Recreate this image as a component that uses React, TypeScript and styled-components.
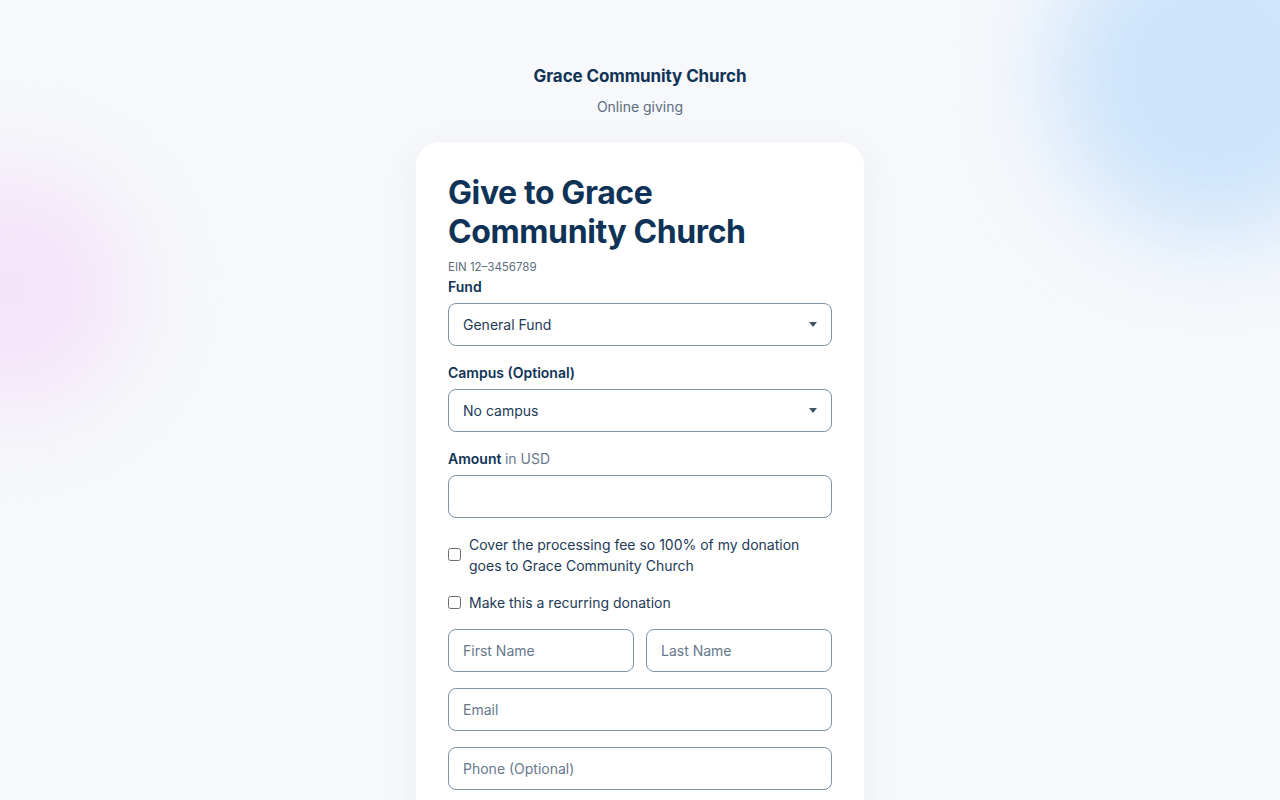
import React from "react";
import styled, { createGlobalStyle } from "styled-components";

const GlobalStyle = createGlobalStyle`
  * {
    box-sizing: border-box;
  }

  body {
    margin: 0;
    background-color: #f6f8fb;
    font-family: Inter, "Noto Sans", "Liberation Sans", sans-serif;
    color: #0f3356;
    overflow-x: hidden;
  }
`;

const Page = styled.div`
  position: relative;
  min-height: 100vh;
  overflow: hidden;
  display: flex;
  flex-direction: column;
  align-items: center;
  padding: 64px 16px 48px;
`;

const Blob = styled.div<{ $color: string; $size: number; $x: number; $y: number }>`
  position: absolute;
  left: ${(p) => p.$x}px;
  top: ${(p) => p.$y}px;
  width: ${(p) => p.$size}px;
  height: ${(p) => p.$size}px;
  border-radius: 50%;
  background: ${(p) => p.$color};
  filter: blur(45px);
  z-index: 0;
  pointer-events: none;
`;

const Header = styled.header`
  position: relative;
  z-index: 1;
  text-align: center;
  margin-bottom: 25px;
`;

const ChurchName = styled.h2`
  margin: 0;
  font-size: 17px;
  line-height: 24px;
  font-weight: 700;
  color: #0f3356;
  letter-spacing: -0.1px;
`;

const Subtitle = styled.p`
  margin: 9px 0 0;
  font-size: 14px;
  line-height: 20px;
  color: #5d6d80;
`;

const Card = styled.main`
  position: relative;
  z-index: 1;
  width: 448px;
  background: #ffffff;
  border-radius: 24px;
  padding: 32px 32px 40px;
  box-shadow: 0 10px 40px rgba(30, 50, 80, 0.06);
`;

const Title = styled.h1`
  margin: 0;
  font-size: 32px;
  line-height: 38.5px;
  font-weight: 700;
  letter-spacing: -0.4px;
  color: #0f3356;
`;

const Ein = styled.p`
  margin: 7.5px 0 2px;
  font-size: 11.5px;
  line-height: 16px;
  color: #5d6d80;
`;

const Field = styled.div<{ $mb?: number }>`
  display: flex;
  flex-direction: column;
  gap: 6px;
  margin-bottom: ${(p) => p.$mb ?? 17}px;
`;

const Label = styled.label`
  font-size: 14px;
  line-height: 20px;
  font-weight: 600;
  color: #0f3356;
`;

const LabelHint = styled.span`
  font-weight: 400;
  color: #6b7b8e;
`;

const SelectBox = styled.div`
  height: 43px;
  border: 1px solid #7f92a6;
  border-radius: 8px;
  display: flex;
  align-items: center;
  justify-content: space-between;
  padding: 0 14px;
  font-size: 14px;
  color: #1d3a57;
  background: #fff;
`;

const Caret = styled.span`
  width: 0;
  height: 0;
  border-left: 4.5px solid transparent;
  border-right: 4.5px solid transparent;
  border-top: 5px solid #42546a;
`;

const TextInput = styled.input`
  width: 100%;
  height: 43px;
  border: 1px solid #7f92a6;
  border-radius: 8px;
  padding: 0 14px;
  font-family: inherit;
  font-size: 14px;
  color: #1d3a57;
  background: #fff;
  outline: none;

  &::placeholder {
    color: #66788c;
  }
`;

const CheckRow = styled.label<{ $mb?: number }>`
  display: flex;
  align-items: center;
  gap: 8px;
  font-size: 14px;
  line-height: 21px;
  color: #1d3a57;
  margin-bottom: ${(p) => p.$mb ?? 16}px;
`;

const Box = styled.span`
  flex: none;
  width: 13px;
  height: 13px;
  border: 1px solid #6a6f76;
  border-radius: 2.5px;
  background: #fff;
`;

const NameRow = styled.div`
  display: grid;
  grid-template-columns: 1fr 1fr;
  gap: 12px;
  margin-top: 16px;
  margin-bottom: 16px;
`;

const Stack = styled.div`
  display: flex;
  flex-direction: column;
  gap: 16px;
`;

const Select = ({ value }: { value: string }) => (
  <SelectBox>
    <span>{value}</span>
    <Caret />
  </SelectBox>
);

export default function App() {
  return (
    <>
      <GlobalStyle />
      <Page>
        <Blob $color="#cde4fb" $size={330} $x={1050} $y={-90} />
        <Blob $color="#f4e4f8" $size={240} $x={-110} $y={170} />
        <Header>
          <ChurchName>Grace Community Church</ChurchName>
          <Subtitle>Online giving</Subtitle>
        </Header>
        <Card>
          <Title>
            Give to Grace
            <br />
            Community Church
          </Title>
          <Ein>EIN 12–3456789</Ein>
          <Field>
            <Label>Fund</Label>
            <Select value="General Fund" />
          </Field>
          <Field>
            <Label>Campus (Optional)</Label>
            <Select value="No campus" />
          </Field>
          <Field $mb={16}>
            <Label>
              Amount <LabelHint>in USD</LabelHint>
            </Label>
            <TextInput type="text" />
          </Field>
          <CheckRow>
            <Box />
            <span>
              Cover the processing fee so 100% of my donation
              <br />
              goes to Grace Community Church
            </span>
          </CheckRow>
          <CheckRow $mb={0}>
            <Box />
            <span>Make this a recurring donation</span>
          </CheckRow>
          <NameRow>
            <TextInput placeholder="First Name" />
            <TextInput placeholder="Last Name" />
          </NameRow>
          <Stack>
            <TextInput placeholder="Email" />
            <TextInput placeholder="Phone (Optional)" />
            <TextInput placeholder="Address" />
          </Stack>
        </Card>
      </Page>
    </>
  );
}
